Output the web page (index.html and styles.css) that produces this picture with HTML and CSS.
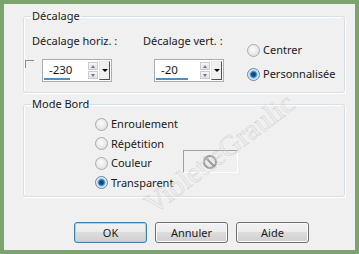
FILE: index.html
```html
<!DOCTYPE html>
<html lang="fr">
<head>
<meta charset="utf-8">
<title>Décalage</title>
<link rel="stylesheet" href="styles.css">
</head>
<body>
<div class="frame">
  <fieldset class="group g1">
    <legend>Décalage</legend>
    <div class="g1-body">
      <div class="col c1">
        <div class="lbl">Décalage horiz. :</div>
        <div class="ctl-row">
          <span class="check"></span>
          <div class="spin">
            <span class="val"><span class="num">-230</span></span>
            <span class="arrows"><span class="up"></span><span class="down"></span></span>
            <span class="drop"></span>
          </div>
        </div>
      </div>
      <div class="col c2">
        <div class="lbl">Décalage vert. :</div>
        <div class="ctl-row">
          <div class="spin">
            <span class="val"><span class="num wide">-20</span></span>
            <span class="arrows"><span class="up"></span><span class="down"></span></span>
            <span class="drop"></span>
          </div>
        </div>
      </div>
      <div class="radios r1">
        <div class="radio"><span class="circle"></span>Centrer</div>
        <div class="radio"><span class="circle on"></span>Personnalisée</div>
      </div>
    </div>
  </fieldset>

  <fieldset class="group g2">
    <legend>Mode Bord</legend>
    <div class="g2-body">
      <div class="radios r2">
        <div class="radio"><span class="circle"></span>Enroulement</div>
        <div class="radio"><span class="circle"></span>Répétition</div>
        <div class="radio"><span class="circle"></span>Couleur</div>
        <div class="radio"><span class="circle on"></span>Transparent</div>
      </div>
      <div class="swatch">
        <svg width="16" height="16" viewBox="0 0 16 16"><circle cx="8" cy="8" r="6" fill="none" stroke="#9a9a9a" stroke-width="2"/><line x1="3.8" y1="3.8" x2="12.2" y2="12.2" stroke="#9a9a9a" stroke-width="2"/></svg>
      </div>
    </div>
  </fieldset>

  <div class="buttons">
    <button class="btn default">OK</button>
    <button class="btn">Annuler</button>
    <button class="btn">Aide</button>
  </div>

  <span class="watermark">VioletteGraulic</span>
</div>
</body>
</html>
```

FILE: styles.css
```css
* { box-sizing: border-box; }
html, body { margin: 0; padding: 0; }
body {
  width: 359px;
  height: 254px;
  overflow: hidden;
  font-family: "Noto Sans", "DejaVu Sans", sans-serif;
  font-size: 11px;
  color: #1a1a1a;
}
.frame {
  position: relative;
  width: 359px;
  height: 254px;
  border: 4px solid #7aa46b;
  background: #f0f0f0;
  padding: 4px 10px 0 19px;
  display: flex;
  flex-direction: column;
  overflow: hidden;
}
.group {
  margin: 0;
  padding: 0;
  border: 1px solid #d5dfe5;
  border-radius: 3px;
  box-shadow: inset 1px 1px 0 #fff, 1px 1px 0 #fff;
  width: 322px;
  min-width: 0;
}
.group legend {
  margin-left: 7px;
  padding: 0 1px;
  line-height: 16px;
  height: 16px;
}
.g1 { height: 85px; }
.g2 { height: 101px; margin-top: 3px; }

.g1-body {
  display: flex;
  padding-top: 9px;
}
.col { display: flex; flex-direction: column; flex: none; }
.c1 { width: 119px; }
.c2 { width: 104px; }
.lbl { line-height: 16px; height: 16px; white-space: nowrap; }
.c1 .lbl { margin-left: 8px; }
.ctl-row { display: flex; margin-top: 10px; }
.check {
  width: 9px;
  height: 8px;
  margin: 1px 0 0 1px;
  border-top: 1px solid #8a8a8a;
  border-left: 1px solid #8a8a8a;
  flex: none;
}
.c1 .spin { margin-left: 8px; }
.c2 .spin { margin-left: 11px; }
.spin {
  width: 70px;
  height: 23px;
  border: 1px solid #abadb3;
  background: #fff;
  display: flex;
  padding: 1px;
  flex: none;
}
.val {
  flex: 1;
  position: relative;
  padding-left: 5px;
  line-height: 18px;
  font-size: 11.5px;
}
.num::after {
  content: "";
  position: absolute;
  left: 0;
  bottom: 0;
  width: 26px;
  height: 2px;
  background: #4f8ec4;
}
.num.wide::after { width: 32px; }
.arrows {
  width: 10px;
  display: flex;
  flex-direction: column;
  gap: 1px;
  margin: 1px 1px 1px 0;
}
.arrows span {
  flex: 1;
  background: linear-gradient(#f6f6f6, #e2e2e2);
  border: 1px solid #c9cbce;
  position: relative;
}
.arrows .up::after, .arrows .down::after {
  content: "";
  position: absolute;
  left: 2px;
  border-left: 2.5px solid transparent;
  border-right: 2.5px solid transparent;
}
.arrows .up::after { top: 2px; border-bottom: 3px solid #6d7a88; }
.arrows .down::after { top: 2px; border-top: 3px solid #6d7a88; }
.drop {
  width: 11px;
  background: #f0f0f0;
  border: 1px solid #e6e6e6;
  border-right-color: #505050;
  border-bottom-color: #505050;
  position: relative;
}
.drop::after {
  content: "";
  position: absolute;
  left: 2px;
  top: 7px;
  border-left: 3px solid transparent;
  border-right: 3px solid transparent;
  border-top: 3px solid #000;
}

.radios { display: flex; flex-direction: column; flex: none; }
.r1 { margin-top: 9px; gap: 8px; }
.r2 { gap: 3.5px; }
.radio {
  display: flex;
  align-items: center;
  height: 16px;
  line-height: 16px;
  white-space: nowrap;
}
.circle {
  width: 13px;
  height: 13px;
  border-radius: 50%;
  border: 1px solid #a9abad;
  background: radial-gradient(circle at 45% 40%, #fdfdfd 0%, #e8e8e8 55%, #d6d6d6 100%);
  margin-right: 3px;
  position: relative;
  flex: none;
}
.circle.on {
  border-color: #6a86a0;
  background: radial-gradient(circle, #0b3a66 0%, #1d5f97 30%, #6fb3e0 45%, #e3f1fb 60%, #cdd7e0 100%);
}

.g2-body {
  display: flex;
  padding: 4px 0 0 71px;
}
.r2 { width: 88px; }
.swatch {
  width: 55px;
  height: 23px;
  margin-top: 34px;
  border-top: 1px solid #a0a0a0;
  border-left: 1px solid #a0a0a0;
  border-right: 1px solid #fff;
  border-bottom: 1px solid #fff;
  display: flex;
  align-items: center;
  padding-left: 18px;
  flex: none;
}

.buttons {
  display: flex;
  gap: 8px;
  margin-top: 25px;
  margin-left: 51px;
}
.btn {
  width: 73px;
  height: 21px;
  padding: 0;
  font-family: inherit;
  font-size: 11px;
  color: #1a1a1a;
  border: 1px solid #707070;
  border-radius: 3px;
  background: linear-gradient(#f2f2f2 0%, #ebebeb 50%, #dddddd 50%, #cfcfcf 100%);
  box-shadow: inset 0 0 0 1px #fbfbfb;
}
.btn.default {
  border-color: #3c7fb1;
  box-shadow: inset 0 0 0 1px #9fd6f3;
}

.watermark {
  position: absolute;
  left: 126px;
  top: 133px;
  font-family: "Liberation Serif", serif;
  font-size: 29px;
  color: transparent;
  -webkit-text-stroke: 0.5px #d2d2d2;
  transform: rotate(-37deg);
  transform-origin: 50% 50%;
  white-space: nowrap;
  pointer-events: none;
}
```
